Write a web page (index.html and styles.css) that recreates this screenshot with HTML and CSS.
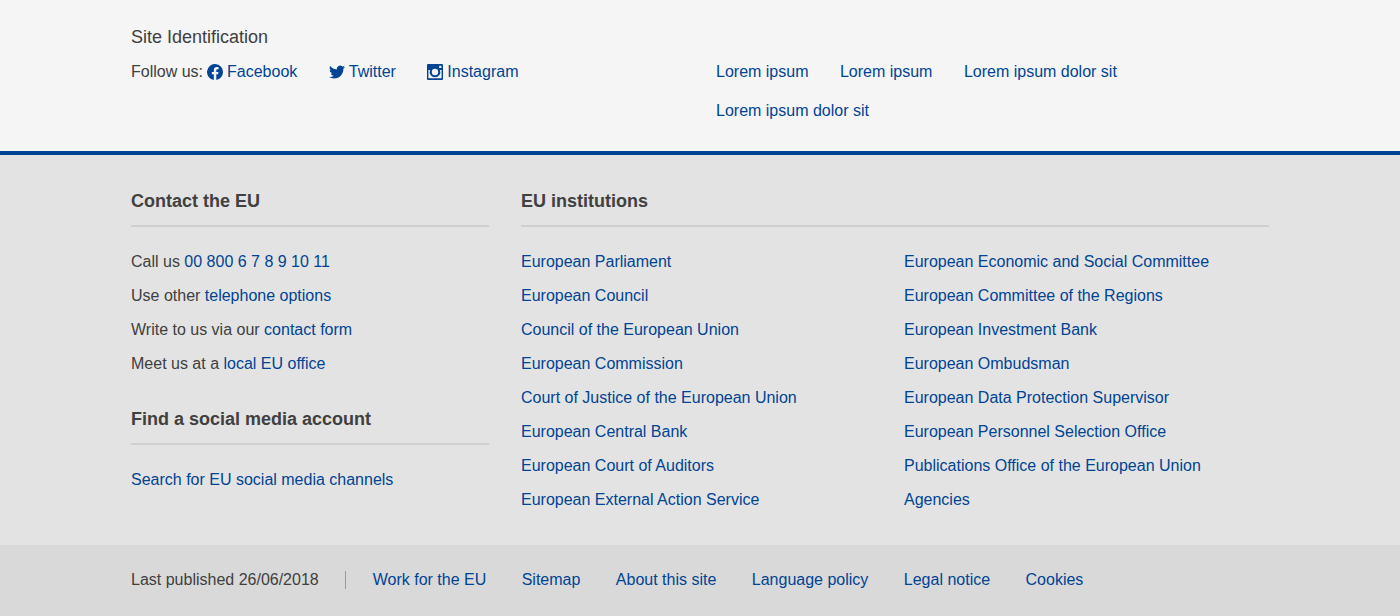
FILE: index.html
```html
<!DOCTYPE html>
<html lang="en">
<head>
<meta charset="utf-8">
<meta name="viewport" content="width=device-width, initial-scale=1">
<title>Footer</title>
<link rel="stylesheet" href="styles.css">
</head>
<body>
<footer class="footer">
  <section class="site">
    <div class="container">
      <h2 class="site-title">Site Identification</h2>
      <div class="site-grid">
        <div class="follow">
          <span class="follow-label">Follow us:</span>
          <ul class="inline-list">
            <li><a class="social" href="#"><svg class="icon" viewBox="0 0 16 16" aria-hidden="true"><path d="M16 8a8 8 0 1 0-9.200 7.900v-5.600H4.800V8h2V6.200c0-2 1.200-3.100 3-3.100.9 0 1.800.2 1.800.2v2h-1c-1 0-1.300.6-1.300 1.200V8h2.200l-.4 2.300H9.300v5.600A8 8 0 0 0 16 8z"/></svg>Facebook</a></li>
            <li><a class="social" href="#"><svg class="icon" viewBox="0 0 24 24" aria-hidden="true"><path d="M23.950 4.570a10 10 0 0 1-2.820.770 4.960 4.960 0 0 0 2.160-2.720c-.950.550-2 .950-3.130 1.180a4.920 4.920 0 0 0-8.380 4.480C7.690 8.100 4.070 6.130 1.640 3.160a4.820 4.820 0 0 0-.670 2.480c0 1.700.870 3.210 2.190 4.100a4.900 4.900 0 0 1-2.230-.620v.060a4.920 4.920 0 0 0 3.950 4.830 5 5 0 0 1-2.210.080 4.940 4.940 0 0 0 4.600 3.420A9.870 9.870 0 0 1 0 19.540a13.990 13.990 0 0 0 7.550 2.210c9.050 0 14-7.500 14-13.980 0-.210 0-.420-.020-.630a9.940 9.940 0 0 0 2.460-2.550z"/></svg>Twitter</a></li>
            <li><a class="social" href="#"><svg class="icon" viewBox="0 0 16 16" aria-hidden="true"><path fill-rule="evenodd" d="M1 0h14a1 1 0 0 1 1 1v14a1 1 0 0 1-1 1H1a1 1 0 0 1-1-1V1a1 1 0 0 1 1-1zM12.200 1.800v2.200h2.200V1.800zM1.400 6v8.200h13.200V6h-1.700a5.300 5.300 0 1 1-9.800 0zM8 4.800a3.200 3.200 0 1 0 0 6.400 3.200 3.200 0 0 0 0-6.400z"/></svg>Instagram</a></li>
          </ul>
        </div>
        <ul class="inline-list">
          <li><a href="#">Lorem ipsum</a></li>
          <li><a href="#">Lorem ipsum</a></li>
          <li><a href="#">Lorem ipsum dolor sit</a></li>
          <li><a href="#">Lorem ipsum dolor sit</a></li>
        </ul>
      </div>
    </div>
  </section>

  <section class="corporate">
    <div class="container corporate-grid">
      <div class="contact">
        <section>
          <h2 class="heading">Contact the EU</h2>
          <ul class="list">
            <li>Call us <a href="#">00 800 6 7 8 9 10 11</a></li>
            <li>Use other <a href="#">telephone options</a></li>
            <li>Write to us via our <a href="#">contact form</a></li>
            <li>Meet us at a <a href="#">local EU office</a></li>
          </ul>
        </section>
        <section>
          <h2 class="heading">Find a social media account</h2>
          <ul class="list">
            <li><a href="#">Search for EU social media channels</a></li>
          </ul>
        </section>
      </div>
      <section>
        <h2 class="heading">EU institutions</h2>
        <div class="institutions">
          <ul class="list">
            <li><a href="#">European Parliament</a></li>
            <li><a href="#">European Council</a></li>
            <li><a href="#">Council of the European Union</a></li>
            <li><a href="#">European Commission</a></li>
            <li><a href="#">Court of Justice of the European Union</a></li>
            <li><a href="#">European Central Bank</a></li>
            <li><a href="#">European Court of Auditors</a></li>
            <li><a href="#">European External Action Service</a></li>
          </ul>
          <ul class="list">
            <li><a href="#">European Economic and Social Committee</a></li>
            <li><a href="#">European Committee of the Regions</a></li>
            <li><a href="#">European Investment Bank</a></li>
            <li><a href="#">European Ombudsman</a></li>
            <li><a href="#">European Data Protection Supervisor</a></li>
            <li><a href="#">European Personnel Selection Office</a></li>
            <li><a href="#">Publications Office of the European Union</a></li>
            <li><a href="#">Agencies</a></li>
          </ul>
        </div>
      </section>
    </div>
  </section>

  <section class="bottom">
    <div class="container bottom-row">
      <span class="published">Last published 26/06/2018</span>
      <ul class="bottom-links">
        <li><a href="#">Work for the EU</a></li>
        <li><a href="#">Sitemap</a></li>
        <li><a href="#">About this site</a></li>
        <li><a href="#">Language policy</a></li>
        <li><a href="#">Legal notice</a></li>
        <li><a href="#">Cookies</a></li>
      </ul>
    </div>
  </section>
</footer>
</body>
</html>
```
FILE: styles.css
```css
* {
  box-sizing: border-box;
}

body {
  margin: 0;
  background: #d9d9d9;
  color: #404040;
  font: 16px/24px "Liberation Sans", Arial, sans-serif;
}

h2,
ul {
  margin: 0;
  padding: 0;
}

ul {
  list-style: none;
}

a {
  color: #004494;
  text-decoration: none;
}

a:hover {
  text-decoration: underline;
}

.container {
  max-width: 1170px;
  margin: 0 auto;
  padding: 0 16px;
}

.site {
  padding: 25px 0 13px;
  background: #f5f5f5;
  border-bottom: 4px solid #004494;
}

.site-title {
  font-size: 18px;
  font-weight: 400;
}

.site-grid {
  display: grid;
  grid-template-columns: 1fr 1fr;
  gap: 32px;
  margin-top: 11px;
}

.follow {
  display: flex;
  gap: 4px;
}

.inline-list li {
  display: inline-block;
  margin: 0 27px 15px 0;
  vertical-align: top;
}

.social {
  display: flex;
  align-items: center;
  gap: 4px;
}

.icon {
  width: 16px;
  height: 16px;
  fill: #004494;
}

.corporate {
  padding: 34px 0 33px;
  background: #e3e3e3;
}

.corporate-grid {
  display: grid;
  grid-template-columns: minmax(0, 358fr) minmax(0, 748fr);
  gap: 32px;
}

.contact {
  display: grid;
  gap: 31px;
  align-content: start;
}

.heading {
  padding-bottom: 12px;
  margin-bottom: 23px;
  border-bottom: 2px solid #cfcfcf;
  font-size: 18px;
  font-weight: 700;
}

.list {
  display: grid;
  gap: 10px;
}

.institutions {
  display: grid;
  grid-template-columns: 1fr 1fr;
  gap: 18px;
}

.bottom {
  padding: 23px 0 24px;
  background: #d9d9d9;
}

.bottom-row {
  display: flex;
  align-items: center;
}

.bottom-row::before {
  content: "";
  order: 1;
  width: 1px;
  height: 18px;
  margin: 0 27px 0 26px;
  background: #9a9a9a;
}

.bottom-links {
  order: 2;
}

.bottom-links li {
  display: inline-block;
  margin-right: 31px;
}
```
